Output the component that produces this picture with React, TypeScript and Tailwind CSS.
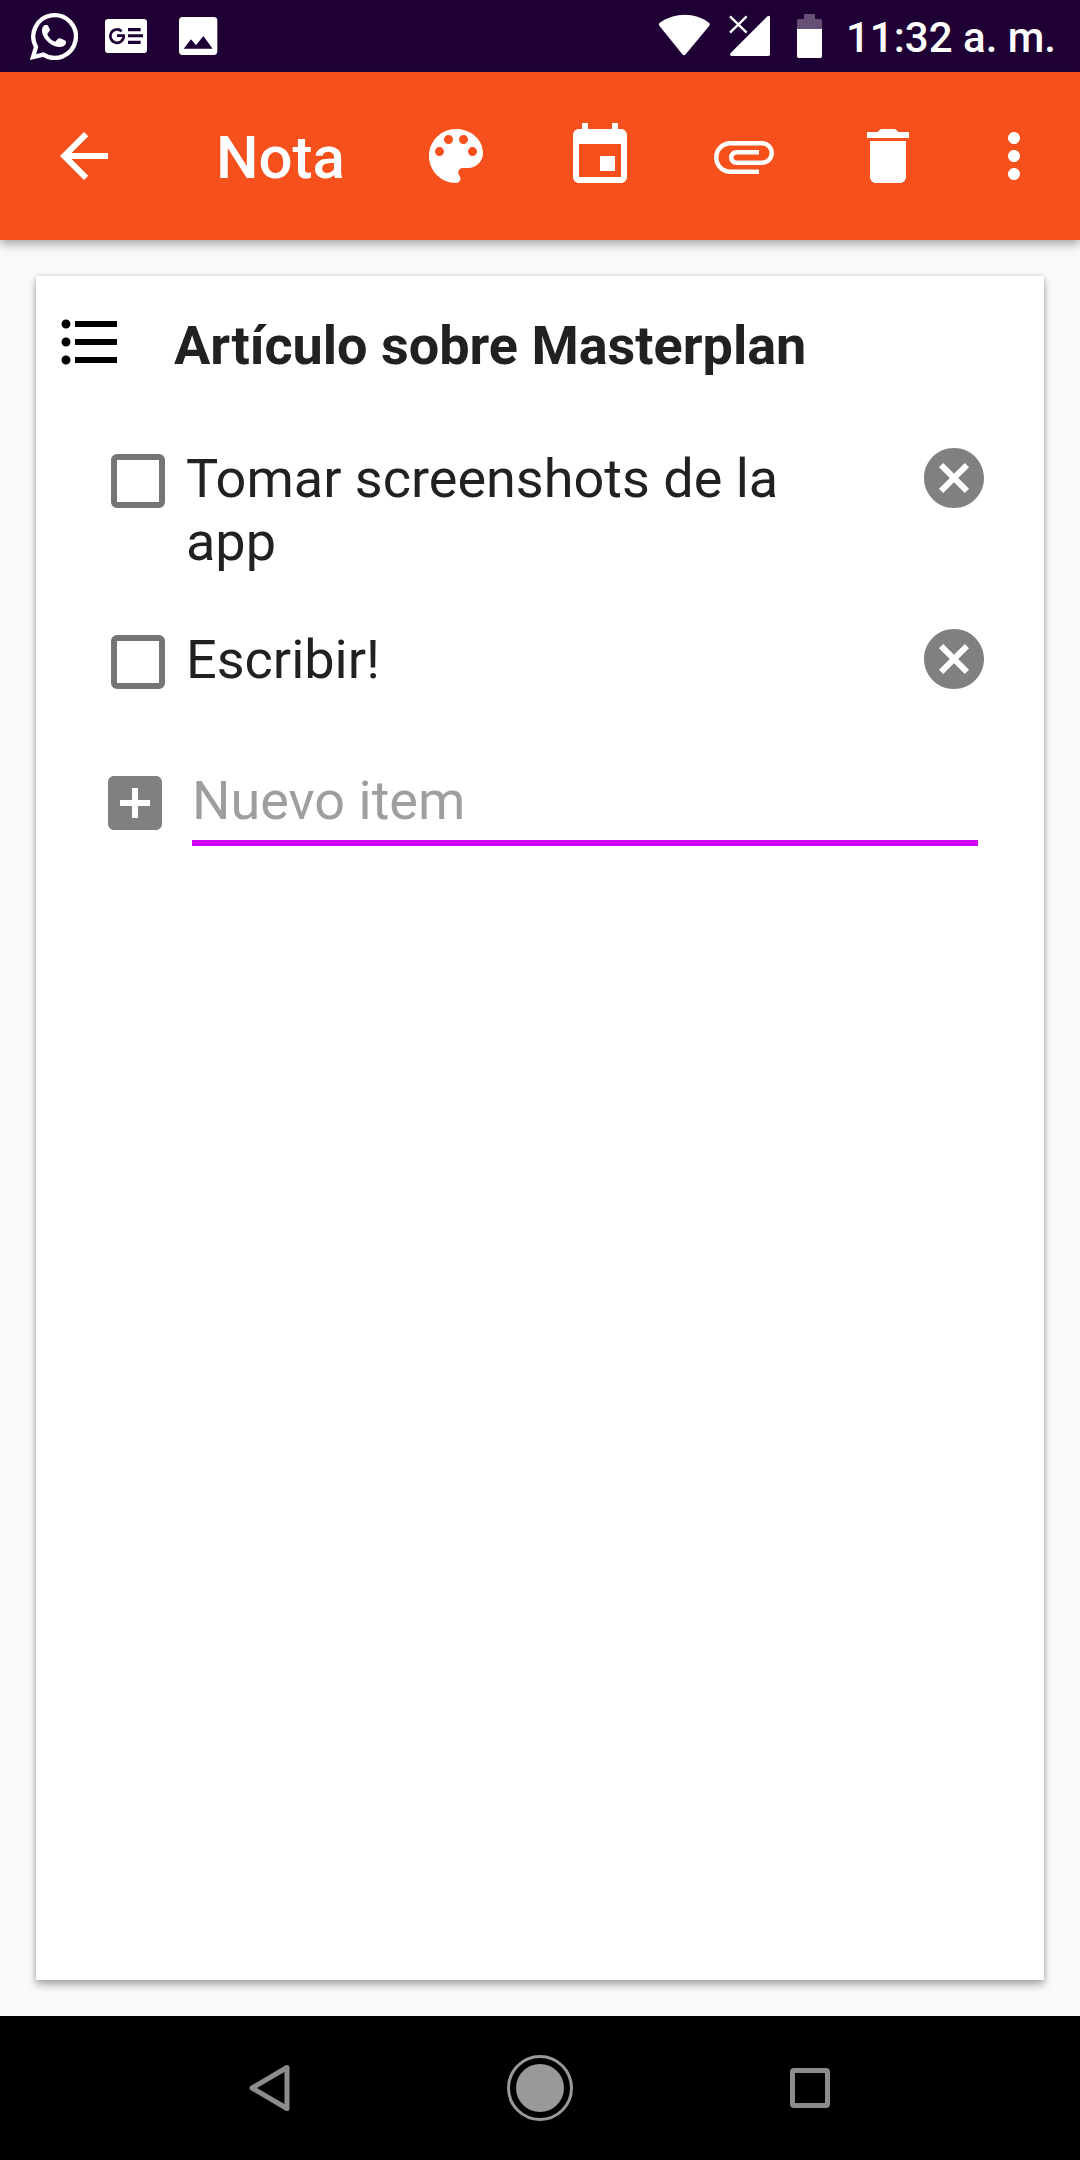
import { useState, type ReactNode } from "react";

function Glyph({ children, className }: { children: ReactNode; className?: string }) {
  return (
    <svg viewBox="0 0 24 24" className={className ?? "size-[72px]"} fill="currentColor" aria-hidden="true">
      {children}
    </svg>
  );
}

function StatusBar() {
  return (
    <div className="flex h-[72px] shrink-0 items-center bg-[#1f0035] pr-6 pl-[30px] text-white">
      <div className="flex flex-1 items-center gap-[27px]">
        {/* WhatsApp */}
        <svg viewBox="90 36 144 144" className="size-12" aria-hidden="true">
          <path
            d="M99 171L108 141A64 64 0 1 1 130 164Z"
            fill="none"
            stroke="#fff"
            strokeWidth="13"
            strokeLinejoin="miter"
          />
          <path
            d="M137 75c-6 0-11 7-11 16c0 24 28 50 52 50c10 0 20-5 20-13c0-4-1-5-4-7l-14-6c-3-1-5 0-7 2l-5 6c-2 2-3 2-6 1c-8-4-15-11-19-19c-1-2-1-4 1-6l4-5c2-2 2-4 1-7l-5-10c-1-2-4-2-7-2z"
            fill="#fff"
          />
        </svg>
        {/* Google News */}
        <svg viewBox="315 57 126 102" className="h-[34px] w-[42px]" aria-hidden="true">
          <rect x="315" y="57" width="126" height="102" rx="10" fill="#fff" />
          <path d="M365 94A20 20 0 1 0 371 107H351" fill="none" stroke="#1f0035" strokeWidth="8" />
          <path d="M384 84h38v10h-38zM384 103h45v9h-45zM384 122h38v10h-38z" fill="#1f0035" />
        </svg>
        {/* Picture */}
        <svg viewBox="531 51 126 114" className="ml-[3px] h-[38px] w-[42px]" aria-hidden="true">
          <rect x="537" y="51" width="115" height="114" rx="11" fill="#fff" />
          <path d="M551 146L573 118L588 136L610 108L638 146z" fill="#1f0035" />
        </svg>
      </div>
      <div className="flex items-center">
        {/* Wi-Fi */}
        <svg viewBox="0 0 156 132" className="h-11 w-[52px]" fill="#fff" aria-hidden="true">
          <path d="M5 26C50 -6 112 -6 153 26Q157 30 154 35L83 121Q78 127 73 121L4 35Q1 30 5 26Z" />
        </svg>
        {/* Mobile signal */}
        <svg viewBox="27 48 126 126" className="ml-[19px] size-[42px]" aria-hidden="true">
          <path d="M141 53Q150 47 150 56V166Q150 171 145 171H35Q27 170 32 162Z" fill="#fff" />
          <path d="M30 52L80 101M80 52L30 101" stroke="#fff" strokeWidth="7" />
        </svg>
        {/* Battery */}
        <svg viewBox="231 42 75 132" className="ml-[26px] h-11 w-[25px]" aria-hidden="true">
          <path d="M252 42h33v15h16q5 0 5 5v26h-75v-26q0-5 5-5h16z" fill="#664f74" />
          <path d="M231 87h75v82q0 5-5 5h-65q-5 0-5-5z" fill="#fff" />
        </svg>
        <time className="ml-6 pt-[3px] text-[42px] leading-[50px] font-medium whitespace-nowrap">11:32 a. m.</time>
      </div>
    </div>
  );
}

function ToolButton({ label, children }: { label: string; children: ReactNode }) {
  return (
    <button type="button" aria-label={label} className="flex h-full w-36 items-center justify-center">
      <Glyph>{children}</Glyph>
    </button>
  );
}

function Toolbar() {
  return (
    <header className="relative z-10 flex h-[168px] shrink-0 items-center bg-[#f6511d] pr-3 text-white shadow-[0_4px_10px_rgba(0,0,0,0.35)]">
      <button type="button" aria-label="Atrás" className="flex h-full w-[168px] items-center justify-center pr-0">
        <Glyph>
          <path d="M20 11H7.83l5.59-5.59L12 4l-8 8 8 8 1.41-1.41L7.83 13H20v-2z" />
        </Glyph>
      </button>
      <h1 className="ml-12 flex-1 pt-1 text-[60px] leading-[70px] font-medium">Nota</h1>
      <ToolButton label="Color">
        <path d="M12 3c-4.97 0-9 4.03-9 9s4.03 9 9 9c.83 0 1.5-.67 1.5-1.5 0-.39-.15-.74-.39-1.01-.23-.26-.38-.61-.38-.99 0-.83.67-1.5 1.5-1.5H16c2.76 0 5-2.24 5-5 0-4.42-4.03-8-9-8zm-5.5 9c-.83 0-1.5-.67-1.5-1.5S5.67 9 6.5 9 8 9.67 8 10.5 7.33 12 6.5 12zm3-4C8.67 8 8 7.33 8 6.5S8.67 5 9.5 5s1.5.67 1.5 1.5S10.33 8 9.5 8zm5 0c-.83 0-1.5-.67-1.5-1.5S13.67 5 14.5 5s1.5.67 1.5 1.5S15.33 8 14.5 8zm3 4c-.83 0-1.5-.67-1.5-1.5S16.67 9 17.5 9s1.5.67 1.5 1.5-.67 1.5-1.5 1.5z" />
      </ToolButton>
      <ToolButton label="Fecha">
        <path d="M17 12h-5v5h5v-5zM16 1v2H8V1H6v2H5c-1.11 0-1.99.9-1.99 2L3 19c0 1.1.89 2 2 2h14c1.1 0 2-.9 2-2V5c0-1.1-.9-2-2-2h-1V1h-2zm3 18H5V8h14v11z" />
      </ToolButton>
      <ToolButton label="Adjuntar">
        <path d="M7.5 18C4.46 18 2 15.54 2 12.5S4.46 7 7.5 7H18c2.21 0 4 1.79 4 4s-1.79 4-4 4H9.5C8.12 15 7 13.88 7 12.5S8.12 10 9.5 10H17v1.5H9.5c-.55 0-1 .45-1 1s.45 1 1 1H18c1.38 0 2.5-1.12 2.5-2.5S19.38 8.5 18 8.5H7.5c-2.21 0-4 1.79-4 4s1.79 4 4 4H17V18H7.5z" />
      </ToolButton>
      <ToolButton label="Eliminar">
        <path d="M6 19c0 1.1.9 2 2 2h8c1.1 0 2-.9 2-2V7H6v12zM19 4h-3.5l-.7-.7q-.3-.3-.7-.3H9.9q-.4 0-.7.3L8.5 4H5v2h14V4z" />
      </ToolButton>
      <button type="button" aria-label="Más opciones" className="flex h-full w-[108px] items-center justify-center">
        <Glyph>
          <path d="M12 8c1.1 0 2-.9 2-2s-.9-2-2-2-2 .9-2 2 .9 2 2 2zm0 2c-1.1 0-2 .9-2 2s.9 2 2 2 2-.9 2-2-.9-2-2-2zm0 6c-1.1 0-2 .9-2 2s.9 2 2 2 2-.9 2-2-.9-2-2-2z" />
        </Glyph>
      </button>
    </header>
  );
}

const initialItems = [
  { id: "item-1", text: "Tomar screenshots de la app" },
  { id: "item-2", text: "Escribir!" },
];

function Note() {
  const [items, setItems] = useState(initialItems);
  const [draft, setDraft] = useState("");

  const addItem = () => {
    if (!draft.trim()) return;
    setItems([...items, { id: `item-${Date.now()}`, text: draft.trim() }]);
    setDraft("");
  };

  return (
    <section className="flex-1 bg-white pt-[30px] text-[#212121] shadow-[0_5px_8px_rgba(0,0,0,0.3),0_0_5px_rgba(0,0,0,0.15)]">
      <div className="flex items-start gap-12 pl-[18px]">
        <Glyph className="size-[72px] shrink-0 text-black">
          <path d="M4 10.5c-.83 0-1.5.67-1.5 1.5s.67 1.5 1.5 1.5 1.5-.67 1.5-1.5-.67-1.5-1.5-1.5zm0-6c-.83 0-1.5.67-1.5 1.5S3.17 7.5 4 7.5 5.5 6.83 5.5 6 4.83 4.5 4 4.5zm0 12c-.83 0-1.5.67-1.5 1.5s.67 1.5 1.5 1.5 1.5-.67 1.5-1.5-.67-1.5-1.5-1.5zM7 19h14v-2H7v2zm0-6h14v-2H7v2zm0-8v2h14V5H7z" />
        </Glyph>
        <h2 className="mt-2 text-[54px] leading-[63px] font-bold">Artículo sobre Masterplan</h2>
      </div>

      <ul className="mt-[69px] flex flex-col gap-[55px] pr-[60px] pl-[75px]">
        {items.map((item) => (
          <li key={item.id} className="flex items-start">
            <input
              id={item.id}
              type="checkbox"
              className="mt-[7px] size-[54px] shrink-0 appearance-none rounded-[6px] border-[6px] border-[#757575] checked:bg-[#757575]"
            />
            <label htmlFor={item.id} className="mr-[72px] ml-[21px] flex-1 text-[54px] leading-[63px]">
              {item.text}
            </label>
            <button
              type="button"
              aria-label={`Quitar ${item.text}`}
              onClick={() => setItems(items.filter((other) => other.id !== item.id))}
              className="mt-px shrink-0 text-[#808080]"
            >
              <svg viewBox="2 2 20 20" className="size-[60px]" fill="currentColor" aria-hidden="true">
                <path d="M12 2C6.47 2 2 6.47 2 12s4.47 10 10 10 10-4.47 10-10S17.53 2 12 2zm5 13.59L15.59 17 12 13.41 8.41 17 7 15.59 10.59 12 7 8.41 8.41 7 12 10.59 15.59 7 17 8.41 13.41 12 17 15.59z" />
              </svg>
            </button>
          </li>
        ))}
      </ul>

      <form
        className="mt-[78px] flex items-start gap-[30px] pr-[66px] pl-[72px]"
        onSubmit={(event) => {
          event.preventDefault();
          addItem();
        }}
      >
        <button type="submit" aria-label="Agregar item" className="mt-[7px] shrink-0 text-[#808080]">
          <svg viewBox="3 3 18 18" className="size-[54px]" fill="currentColor" aria-hidden="true">
            <path d="M19 3H5c-1.11 0-2 .9-2 2v14c0 1.1.89 2 2 2h14c1.1 0 2-.9 2-2V5c0-1.1-.9-2-2-2zm-2 10h-4v4h-2v-4H7v-2h4V7h2v4h4v2z" />
          </svg>
        </button>
        <input
          type="text"
          aria-label="Nuevo item"
          placeholder="Nuevo item"
          value={draft}
          onChange={(event) => setDraft(event.target.value)}
          className="h-[77px] min-w-0 flex-1 border-b-[6px] border-[#d000ff] pb-2 text-[54px] leading-[63px] outline-none placeholder:text-[#9e9e9e]"
        />
      </form>
    </section>
  );
}

function NavBar() {
  return (
    <nav className="flex h-36 shrink-0 justify-center bg-black">
      <button type="button" aria-label="Volver" className="flex w-1/4 items-center justify-center">
        <svg viewBox="0 0 48 48" className="size-12" fill="none" stroke="#8c8c8c" strokeWidth="5" strokeLinejoin="round" aria-hidden="true">
          <path d="M6 24L41 3.500V44.500Z" />
        </svg>
      </button>
      <button type="button" aria-label="Inicio" className="flex w-1/4 items-center justify-center">
        <svg viewBox="0 0 66 66" className="size-[66px]" aria-hidden="true">
          <circle cx="33" cy="33" r="31.500" fill="none" stroke="#999" strokeWidth="3" />
          <circle cx="33" cy="33" r="24" fill="#999" />
        </svg>
      </button>
      <button type="button" aria-label="Recientes" className="flex w-1/4 items-center justify-center">
        <span className="size-10 rounded-[4px] border-[5px] border-[#8c8c8c]" />
      </button>
    </nav>
  );
}

export default function App() {
  return (
    <div className="flex min-h-screen flex-col bg-[#fafafa] font-['Roboto',sans-serif]">
      <StatusBar />
      <Toolbar />
      <main className="flex flex-1 flex-col p-9">
        <Note />
      </main>
      <NavBar />
    </div>
  );
}
